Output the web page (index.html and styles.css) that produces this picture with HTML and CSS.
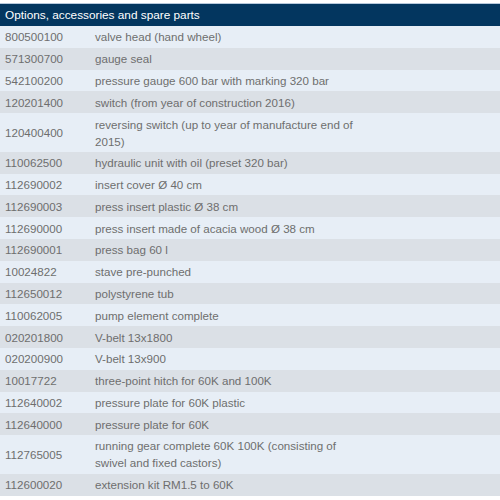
FILE: index.html
```html
<!DOCTYPE html>
<html>
<head>
<meta charset="utf-8">
<link rel="stylesheet" href="styles.css">
</head>
<body>
<div class="parts">
  <div class="head">Options, accessories and spare parts</div>
  <div class="row odd"><span class="num">800500100</span><span class="desc">valve head (hand wheel)</span></div>
  <div class="row even"><span class="num">571300700</span><span class="desc">gauge seal</span></div>
  <div class="row odd"><span class="num">542100200</span><span class="desc">pressure gauge 600 bar with marking 320 bar</span></div>
  <div class="row even"><span class="num">120201400</span><span class="desc">switch (from year of construction 2016)</span></div>
  <div class="row odd"><span class="num">120400400</span><span class="desc">reversing switch (up to year of manufacture end of 2015)</span></div>
  <div class="row even"><span class="num">110062500</span><span class="desc">hydraulic unit with oil (preset 320 bar)</span></div>
  <div class="row odd"><span class="num">112690002</span><span class="desc">insert cover Ø 40 cm</span></div>
  <div class="row even"><span class="num">112690003</span><span class="desc">press insert plastic Ø 38 cm</span></div>
  <div class="row odd"><span class="num">112690000</span><span class="desc">press insert made of acacia wood Ø 38 cm</span></div>
  <div class="row even"><span class="num">112690001</span><span class="desc">press bag 60 l</span></div>
  <div class="row odd"><span class="num">10024822</span><span class="desc">stave pre-punched</span></div>
  <div class="row even"><span class="num">112650012</span><span class="desc">polystyrene tub</span></div>
  <div class="row odd"><span class="num">110062005</span><span class="desc">pump element complete</span></div>
  <div class="row even"><span class="num">020201800</span><span class="desc">V-belt 13x1800</span></div>
  <div class="row odd"><span class="num">020200900</span><span class="desc">V-belt 13x900</span></div>
  <div class="row even"><span class="num">10017722</span><span class="desc">three-point hitch for 60K and 100K</span></div>
  <div class="row odd"><span class="num">112640002</span><span class="desc">pressure plate for 60K plastic</span></div>
  <div class="row even"><span class="num">112640000</span><span class="desc">pressure plate for 60K</span></div>
  <div class="row odd"><span class="num">112765005</span><span class="desc">running gear complete 60K 100K (consisting of swivel and fixed castors)</span></div>
  <div class="row even"><span class="num">112600020</span><span class="desc">extension kit RM1.5 to 60K</span></div>
</div>
</body>
</html>
```

FILE: styles.css
```css
html, body {
  margin: 0;
  padding: 0;
  background: #ffffff;
}
body {
  font-family: "Liberation Sans", Arial, sans-serif;
  font-size: 11.6px;
  line-height: 17px;
  color: #6e6e6e;
}
.parts {
  padding-top: 3px;
}
.head {
  background: #03365f;
  border-top: 1px solid #b7c9dc;
  color: #ffffff;
  padding: 2.5px 5px 2.5px 5px;
  font-size: 11.8px;
}
.row {
  display: grid;
  grid-template-columns: 90px 282px 1fr;
  align-items: center;
}
.row.odd {
  background: #e7eef6;
}
.row.even {
  background: #dbe0e6;
}
.num {
  padding: 2.4px 0 2.4px 5px;
}
.desc {
  padding: 2.4px 5px 2.4px 5px;
}
```
